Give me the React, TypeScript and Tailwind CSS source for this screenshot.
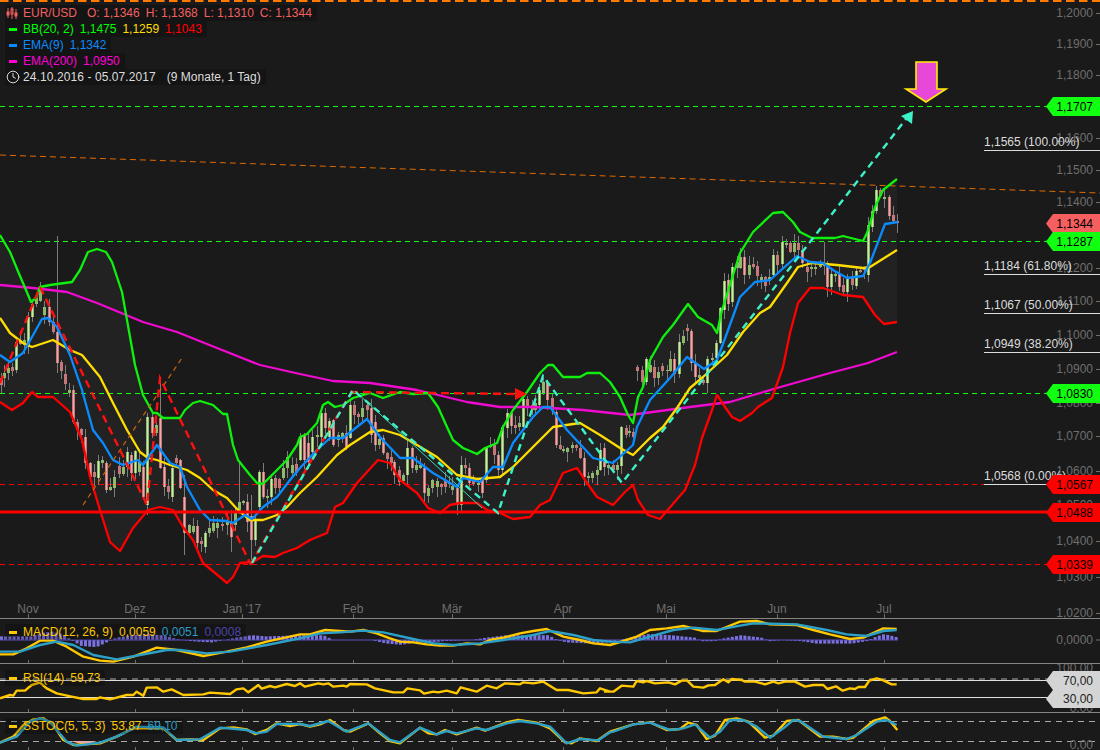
import * as React from 'react';
import { Clock } from 'lucide-react';

type Pt = [number, number];
// x, body top, body bottom, up?, optional wick high / low
type Candle = [number, number, number, number, number?, number?];

const pts = (p: Pt[]) => p.map(([x, y]) => `${x},${y}`).join(' ');
// series below were read from 3x crops, so convert back to page coordinates
const crop = (ox: number, oy: number, p: Pt[]): Pt[] => p.map(([x, y]) => [ox + x / 3, oy + y / 3]);

const BB_UPPER: Pt[] = [[0,235],[10,252],[20,276],[26,290],[31,302],[36,298],[40,287],[50,285],[72,282],[80,270],[88,252],[97,249],[106,252],[112,262],[118,280],[122,292],[127,320],[135,365],[143,395],[153,413],[157,413],[163,418],[180,418],[185,410],[193,403],[200,401],[213,405],[223,414],[227,414],[233,445],[238,460],[250,475],[257,483],[263,484],[272,475],[287,460],[297,445],[300,437],[307,434],[317,423],[323,405],[328,402],[335,407],[343,405],[353,398],[370,393],[383,398],[400,392],[413,394],[428,393],[438,407],[447,427],[453,440],[463,448],[477,454],[485,448],[497,443],[503,427],[513,410],[527,392],[540,373],[548,365],[553,365],[563,377],[580,377],[587,373],[600,373],[610,382],[620,397],[628,415],[633,423],[638,397],[643,387],[650,360],[663,337],[673,325],[688,304],[698,317],[712,325],[717,333],[722,310],[740,253],[753,232],[773,213],[783,212],[793,222],[800,232],[812,238],[835,238],[843,236],[863,241],[867,233],[875,207],[883,190],[897,179]];
const BB_LOWER: Pt[] = [[0,402],[12,410],[23,403],[32,392],[38,397],[53,397],[70,412],[82,440],[90,477],[100,510],[110,542],[120,551],[133,528],[148,510],[160,507],[173,510],[183,527],[193,540],[203,563],[227,583],[233,577],[240,563],[253,562],[263,556],[275,557],[283,553],[297,548],[310,540],[327,533],[335,507],[343,503],[357,483],[378,460],[390,463],[400,480],[417,493],[428,508],[440,513],[450,505],[460,503],[477,503],[487,510],[500,513],[513,519],[530,517],[540,505],[550,500],[563,473],[577,468],[587,483],[597,497],[613,505],[625,492],[633,485],[638,500],[648,515],[660,519],[672,505],[685,490],[695,465],[702,438],[712,410],[717,395],[725,407],[732,417],[740,421],[752,413],[758,407],[772,398],[783,367],[790,333],[798,303],[810,288],[823,288],[843,295],[863,297],[875,315],[884,324],[897,322]];
const BB_MID: Pt[] = [[0,318],[10,333],[23,343],[32,347],[53,340],[70,350],[82,355],[100,377],[113,403],[127,430],[140,452],[148,458],[157,460],[170,465],[187,470],[200,478],[213,490],[227,498],[238,510],[250,520],[263,520],[277,515],[287,507],[300,493],[317,477],[337,455],[350,445],[370,432],[383,430],[400,435],[417,445],[437,457],[457,475],[477,479],[500,477],[513,467],[533,447],[553,427],[580,423],[600,435],[620,448],[633,455],[650,438],[663,427],[677,408],[690,388],[703,377],[727,355],[743,332],[760,313],[770,307],[787,283],[798,267],[812,263],[837,265],[863,268],[870,267],[897,250]];
const EMA9: Pt[] = [[0,355],[10,362],[23,353],[32,337],[42,319],[48,318],[57,327],[70,355],[82,390],[93,430],[103,443],[113,460],[123,465],[138,460],[143,465],[157,445],[170,463],[180,467],[187,487],[200,510],[210,520],[227,521],[233,523],[245,515],[252,519],[263,507],[277,497],[290,480],[300,468],[317,450],[330,438],[343,438],[367,419],[380,437],[400,458],[413,458],[433,473],[457,487],[463,478],[480,482],[493,467],[503,467],[513,443],[533,417],[543,407],[550,407],[567,430],[593,458],[613,463],[633,445],[637,427],[650,400],[670,378],[687,357],[704,369],[717,360],[727,333],[740,297],[755,282],[770,280],[797,256],[810,262],[823,263],[833,270],[847,278],[863,276],[870,263],[885,224],[898,222]];
const EMA200: Pt[] = [[0,285],[33,288],[67,292],[97,303],[143,322],[177,332],[217,348],[260,365],[300,374],[333,381],[370,383],[417,390],[467,402],[500,407],[533,407],[583,410],[630,415],[690,407],[730,402],[777,388],[830,373],[868,363],[897,352]];

const CANDLES: Candle[] = [
  [1,378,385,0],[4,373,378,1],[8,368,373,1],[12,367,371,0],[16,342,370,1],[20,340,344,0],[24,340,345,1],[28,317,347,1],[32,304,317,1],[36,298,304,1],[40,290,301,1],[44,307,315,1],[49,307,322,0],[53,322,332,0],[57,332,363,0,236],[61,362,371,0],[65,374,384,0],[69,390,393,1],[73,390,422,0],[77,422,430,0],[81,429,435,0],[85,437,463,0],[90,463,477,0],[94,472,477,0],[98,461,478,1],[102,460,463,1],[106,463,490,0],[110,487,490,1],[114,477,488,1],[119,466,474,0],[123,467,474,1],[127,452,467,1],[131,455,473,0],[135,451,473,1],[139,461,472,1],[143,467,497,0],[147,417,505,1],[152,417,433,0],[156,425,433,1],[160,418,468,0,378],[164,467,487,0],[168,486,492,0],[172,468,497,1],[176,458,463,0],[180,460,488,0],[184,497,533,0,475,555],[189,525,533,1],[193,526,532,1],[197,526,543,0],[201,541,544,0],[205,533,547,1],[209,528,533,1],[213,523,531,1],[217,523,528,1],[222,524,526,0],[227,522,525,1],[231,522,537,0,510,552],[235,513,525,1],[239,502,510,1,462],[243,501,503,1],[247,502,522,0],[251,516,540,0,495,560],[255,520,540,1],[259,472,507,1],[263,472,497,0],[267,496,498,1],[271,479,497,1],[275,478,488,0],[279,479,488,0],[283,468,478,1],[287,457,468,1],[292,465,473,1],[296,464,473,0],[300,437,460,1],
  [304,435,460,0],[308,443,462,0],[312,437,452,1],[317,435,437,1],[321,413,437,1],[325,413,428,0],[329,421,437,1],[333,420,445,0],[338,435,440,1],[342,433,438,1],[346,433,447,0],[350,405,438,1],[354,405,415,0],[358,414,417,0],[362,408,417,1],[367,405,410,0],[371,408,435,0],[375,422,445,0],[379,439,445,1],[383,438,453,0],[387,453,459,0],[391,457,463,0],[394,462,475,0],[399,470,482,0],[403,475,481,1],[407,448,475,1],[412,448,468,0],[416,465,470,1],[420,465,468,1],[424,468,493,0],[428,488,496,1],[432,480,488,1],[437,481,487,1],[441,484,487,0],[445,480,487,0],[449,482,484,1],[452,486,490,1],[457,488,505,0],[461,465,505,1],[465,465,468,0],[469,468,483,0],[473,478,484,0],[478,483,485,1],[482,480,493,0],[486,448,480,1],[490,445,447,1],[494,445,455,0],[498,455,470,0],[502,427,470,1],[507,413,428,1],[511,413,426,0],[515,425,428,0],[519,423,427,1],[523,399,427,1],[527,399,406,0],[532,405,410,0],[535,403,410,1],[539,390,405,1],[543,382,393,1],[547,382,400,0],[552,398,410,0],[556,412,445,0],[560,445,449,0],[563,449,451,1],[567,448,452,1],[572,445,448,1],[576,445,448,0],[580,448,458,0],[584,458,477,0],[588,476,478,1],[592,473,478,1],[597,470,475,1],[600,450,470,1],[604,448,467,0],[608,465,468,1],[613,465,470,0],[617,465,470,1],[621,427,466,1],[626,428,435,0],[629,431,433,1],[633,432,437,0],
  [637,367,371,0],[642,370,382,0],[646,359,382,1],[650,365,372,1],[654,367,378,0],[658,372,378,1],[662,366,371,0],[667,370,371,1],[670,359,371,1],[674,359,374,0],[679,342,374,1],[683,336,343,1],[687,328,331,0],[691,331,363,0],[695,363,377,0],[699,375,378,1],[703,380,383,0],[707,359,383,1],[712,358,360,1],[716,343,358,1],[720,308,343,1],[724,281,310,1],[728,280,304,0],[732,267,302,1],[737,262,268,1],[740,257,268,1],[744,257,275,0],[749,265,275,1],[753,264,267,0],[757,266,276,0],[761,277,281,1],[765,277,286,0],[769,277,281,1],[773,255,275,1],[777,255,265,0],[782,242,264,1],[786,243,245,1],[790,243,252,0],[794,243,252,1],[798,243,250,0],[802,250,263,0],[807,267,272,0],[811,267,269,1],[815,267,269,1],[820,265,267,1],[824,264,266,1,242],[827,267,287,0],[831,274,287,1],[835,274,276,1],[839,274,287,0],[843,285,292,0],[847,279,292,1],[852,278,285,0],[856,271,286,1],[860,270,272,0],[864,268,270,1],[868,225,275,1],[872,211,227,1],[876,190,211,1],[880,190,196,0],[884,197,199,1],[889,197,216,0],[893,215,221,0],[897,221,223,0,214,233],
];

const MACD_Y: Pt[] = [...crop(0,600,[[0,163],[40,163],[80,145],[120,122],[160,122],[200,140],[250,170],[300,182],[340,185],[400,170],[470,143],[530,150],[610,168],[680,155],[740,142],[800,125],[900,103]]), ...crop(300,615,[[30,58],[75,45],[120,48],[150,50],[190,45],[230,55],[270,70],[300,80],[340,82],[380,88],[420,92],[460,92],[500,85],[540,88],[570,75],[610,68],[660,55],[700,48],[740,42],[790,65],[840,75],[880,85],[930,90]]), ...crop(600,615,[[70,78],[110,65],[150,45],[200,40],[250,33],[310,48],[350,48],[420,20],[470,18],[510,28],[590,30],[640,45],[690,58],[750,72],[790,68],[850,40],[890,42]])];
const MACD_T: Pt[] = [...crop(0,600,[[0,155],[60,155],[120,135],[170,125],[220,135],[280,165],[350,178],[420,165],[500,150],[540,150],[620,160],[690,155],[800,135],[900,115]]), ...crop(300,615,[[60,55],[120,52],[190,47],[250,52],[340,72],[400,85],[460,90],[540,85],[610,75],[700,60],[750,48],[820,60],[880,75]]), ...crop(600,615,[[30,80],[90,82],[150,65],[220,45],[280,38],[350,45],[420,32],[460,25],[590,28],[680,45],[740,58],[800,63],[850,48],[890,45]])];
// histogram height around the zero line, by position
const HIST_KEYS: Pt[] = [[0,3],[30,3],[40,6],[50,7],[60,5],[70,0],[80,-5],[95,-6],[105,-2],[115,2],[130,4],[145,5],[160,4],[175,1],[190,-1],[210,-2],[235,2],[250,4],[265,3],[300,4],[322,4],[332,0],[370,0],[385,-3],[400,-4],[415,-2],[430,-2],[440,-1],[470,0],[485,2],[505,4],[525,4],[547,4],[556,0],[565,-2],[590,-3],[605,-2],[618,0],[630,2],[647,5],[670,4],[693,2],[700,-1],[713,-1],[720,1],[740,4],[760,2],[768,-1],[780,0],[800,-1],[815,-3],[850,-3],[865,-1],[875,3],[883,5],[897,2]];

const RSI: Pt[] = [...crop(0,600,[[0,295],[30,285],[40,287],[50,272],[75,272],[95,255],[120,248],[140,265],[170,280],[215,290],[250,297],[290,297],[300,292],[330,298],[380,285],[400,285],[410,275],[430,287],[440,263],[470,262],[490,275],[515,268],[550,285],[610,283],[630,278],[690,282],[710,268],[730,265],[745,277],[775,255],[785,266],[810,258],[825,262],[860,252],[885,258],[900,250]]), ...crop(300,615,[[15,215],[55,205],[70,208],[85,205],[100,215],[130,212],[140,215],[150,207],[200,208],[225,220],[280,232],[310,232],[322,220],[360,226],[372,236],[400,230],[415,232],[440,227],[470,235],[482,217],[530,230],[560,212],[590,220],[615,205],[660,208],[670,202],[700,205],[730,200],[770,225],[805,225],[850,235],[890,232],[900,220],[930,230]]), ...crop(600,615,[[15,230],[40,230],[65,212],[100,215],[110,198],[130,202],[140,198],[165,205],[205,202],[225,208],[245,197],[262,197],[280,215],[310,218],[325,211],[345,210],[370,193],[385,202],[395,192],[425,195],[435,200],[465,200],[495,208],[520,200],[535,205],[555,200],[585,200],[615,215],[640,210],[670,210],[682,222],[708,214],[728,227],[750,220],[765,222],[775,216],[795,216],[808,197],[830,190],[850,196],[875,208],[890,208]])];

const STOCH_Y: Pt[] = [...crop(0,600,[[0,428],[40,410],[70,375],[100,358],[130,355],[160,375],[190,420],[220,435],[300,430],[350,410],[400,385],[440,385],[490,385],[530,420],[570,418],[610,420],[660,385],[700,382],[740,388],[765,402],[800,390],[830,370],[870,378],[900,372]]), ...crop(300,615,[[30,335],[60,328],[90,315],[130,345],[150,350],[205,325],[240,355],[270,378],[300,385],[360,338],[385,355],[410,358],[435,345],[470,358],[530,338],[555,347],[620,322],[655,315],[710,323],[750,340],[795,382],[815,385],[840,370],[890,378],[930,350]]), ...crop(600,615,[[30,350],[100,328],[150,322],[200,345],[240,342],[265,323],[290,330],[320,372],[345,362],[375,315],[410,310],[445,320],[495,368],[520,362],[560,318],[595,315],[660,365],[700,365],[740,372],[760,368],[820,318],[855,307],[870,318],[892,345]])];
const STOCH_T: Pt[] = [...crop(0,600,[[0,428],[50,410],[90,365],[120,355],[150,365],[200,425],[230,437],[300,428],[350,410],[410,380],[490,382],[530,420],[600,418],[660,383],[740,390],[770,400],[800,395],[830,372],[900,372]]), ...crop(300,615,[[30,333],[85,318],[140,350],[205,325],[270,375],[300,382],[360,338],[410,358],[440,348],[470,355],[530,340],[560,345],[620,325],[660,318],[710,325],[750,335],[800,385],[840,372],[895,376],[930,352]]), ...crop(600,615,[[40,350],[100,328],[150,323],[210,345],[250,340],[285,328],[330,368],[360,350],[390,315],[430,315],[470,335],[510,368],[550,340],[580,315],[600,318],[670,365],[740,372],[770,360],[830,320],[860,315],[890,330]])];

const MONTHS: [string, number][] = [['Nov',28],['Dez',135],["Jan '17",242],['Feb',353],['Mär',452],['Apr',563],['Mai',666],['Jun',777],['Jul',884]];
const PRICE_AXIS: [string, number][] = [['1,2000',13],['1,1900',44],['1,1800',75],['1,1600',138],['1,1500',170],['1,1400',202],['1,1200',268],['1,1100',301],['1,1000',335],['1,0900',369],['1,0800',403],['1,0700',436],['1,0600',471],['1,0500',505],['1,0400',541],['1,0300',577],['1,0200',613]];
const FIBS: [string, number][] = [['1,1565 (100.00%)',150],['1,1184 (61.80%)',274],['1,1067 (50.00%)',313],['1,0949 (38.20%)',352],['1,0568 (0.00%)',484]];
const TAGS: [string, number, string][] = [['1,1707',106,'bg-[#11ff11]'],['1,1344',223,'bg-[#f65f5f]'],['1,1287',241,'bg-[#11ff11]'],['1,0830',393,'bg-[#11ff11]'],['1,0567',484,'bg-[#ff0000]'],['1,0488',512,'bg-[#ff0000]'],['1,0339',564,'bg-[#ff0000]']];

function histAt(x: number) {
  for (let i = 1; i < HIST_KEYS.length; i++) {
    const [x0, v0] = HIST_KEYS[i - 1];
    const [x1, v1] = HIST_KEYS[i];
    if (x <= x1) return v0 + ((v1 - v0) * (x - x0)) / (x1 - x0);
  }
  return 0;
}

function Candles() {
  return (
    <>
      {CANDLES.map(([x, top, bot, up, hi, lo]) => {
        const h = bot - top;
        const high = hi ?? top - (((x * 13) % 9) + 1);
        const low = lo ?? bot + (((x * 7) % 10) + 1);
        return (
          <g key={x}>
            <line x1={x + 0.5} x2={x + 0.5} y1={high} y2={low} stroke="#7d7d7d" />
            <rect x={x - 1} y={top} width={3} height={h} fill={up ? '#8fb96c' : '#c57878'} />
            {h > 12 && <rect x={x} y={top} width={1} height={h} fill={up ? '#cbe9a8' : '#ebaaaa'} />}
          </g>
        );
      })}
    </>
  );
}

function MainChart() {
  return (
    <svg className="absolute inset-0" width={1100} height={618} viewBox="0 0 1100 618">
      <polygon points={pts([...BB_UPPER, ...[...BB_LOWER].reverse()])} fill="#222222" />
      <line x1={0} x2={1100} y1={1} y2={1} stroke="#ff7a00" strokeWidth={2} strokeDasharray="8.5 4.5" />
      <line x1={0} y1={155} x2={1100} y2={193} stroke="#e06a00" strokeDasharray="6 4" />
      <g stroke="#11ff11" strokeDasharray="5 4">
        <line x1={0} x2={1048} y1={106.5} y2={106.5} />
        <line x1={0} x2={1048} y1={241.5} y2={241.5} />
        <line x1={0} x2={1048} y1={393.5} y2={393.5} />
      </g>
      <g stroke="#ff0000" strokeDasharray="5 4">
        <line x1={0} x2={1048} y1={484.5} y2={484.5} />
        <line x1={0} x2={1048} y1={564.5} y2={564.5} />
      </g>
      <Candles />
      <g fill="none" strokeWidth={2.3} strokeLinejoin="round">
        <polyline points={pts(EMA200)} stroke="#f00ad0" />
        <polyline points={pts(BB_UPPER)} stroke="#0ff00f" />
        <polyline points={pts(BB_LOWER)} stroke="#ff0000" />
        <polyline points={pts(BB_MID)} stroke="#ffdd00" />
        <polyline points={pts(EMA9)} stroke="#0a8cff" />
      </g>
      <line x1={0} x2={1050} y1={512} y2={512} stroke="#ff0000" strokeWidth={3} />

      <line x1={83} y1={505} x2={182} y2={358} stroke="#c8660c" strokeWidth={1.2} strokeDasharray="5 4" />
      <polyline points="0,383 40,287 147,505 160,378 250,563" fill="none" stroke="#ff1010" strokeWidth={2.4} strokeDasharray="8 5" />
      <line x1={250} y1={565} x2={352} y2={391} stroke="#ff1010" strokeWidth={2.4} strokeDasharray="8 5" />
      <line x1={350} y1={392} x2={516} y2={394} stroke="#ff1010" strokeWidth={2.4} strokeDasharray="8 5" />
      <polygon points="515,388 527,394 515,400" fill="#ff1010" />

      <line x1={355} y1={391} x2={482} y2={508} stroke="#39d9b5" />
      <polyline points="252,563 353,390 498,513 543,376 622,483 906,119" fill="none" stroke="#3df2c8" strokeWidth={2.4} strokeDasharray="7 5" />
      <polygon points="901,116 913,111 912,124" fill="#3df2c8" />

      <polygon points="916,62 937,62 937,89 946,89 926,102 906,89 916,89" fill="#e848d8" stroke="#ffee00" strokeWidth={1.6} />

      <g stroke="#6f6f6f">
        {PRICE_AXIS.map(([t, y]) => <line key={t} x1={1096} x2={1100} y1={y + 0.5} y2={y + 0.5} />)}
        {MONTHS.map(([t, x]) => <line key={t} x1={x + 0.5} x2={x + 0.5} y1={614} y2={618} />)}
      </g>
    </svg>
  );
}

// svg for a lower pane, drawn in page coordinates
function PaneSvg({ top, height, children, ticksAt }: { top: number; height: number; children: React.ReactNode; ticksAt: number }) {
  return (
    <svg className="absolute inset-0" width={1100} height={height} viewBox={`0 ${top} 1100 ${height}`}>
      {children}
      <g stroke="#6f6f6f">
        {MONTHS.map(([t, x]) => <line key={t} x1={x + 0.5} x2={x + 0.5} y1={ticksAt - 3} y2={ticksAt} />)}
      </g>
    </svg>
  );
}

function Legend({ children }: { children: React.ReactNode }) {
  return <div className="flex h-4 w-fit items-center gap-[6px] bg-black/20 pl-1 pr-[5px] text-xs leading-4">{children}</div>;
}

function Swatch({ className }: { className: string }) {
  return <span className={`h-[3px] w-2 ${className}`} />;
}

function AxisLabel({ text, y }: { text: string; y: number }) {
  return (
    <span className="absolute right-[7px] -translate-y-1/2 text-xs leading-none text-[#6f6f6f]" style={{ top: y }}>
      {text}
    </span>
  );
}

function CandleIcon() {
  return (
    <svg width={12} height={12} viewBox="0 0 12 12" className="-ml-[3px] -mr-[1px]" stroke="#f26060" fill="none">
      <path d="M2 1v10M6 0v12M10 2v10" />
      <rect x={1} y={5} width={2} height={3} fill="#f26060" />
      <rect x={5} y={2} width={2} height={5} />
      <rect x={9} y={6} width={2} height={3} fill="#f26060" />
    </svg>
  );
}

export default function App() {
  return (
    <div className="flex h-[750px] w-[1100px] flex-col overflow-hidden bg-[#1a1a1a] font-['Liberation_Sans',Arial,sans-serif]">
      {/* price pane */}
      <section className="relative h-[619px] shrink-0 overflow-hidden border-b border-[#85857f]">
        <MainChart />
        {PRICE_AXIS.map(([t, y]) => <AxisLabel key={t} text={t} y={y} />)}
        {MONTHS.map(([t, x]) => (
          <span key={t} className="absolute top-[603px] -translate-x-1/2 text-xs leading-none text-[#6f6f6f]" style={{ left: x }}>
            {t}
          </span>
        ))}
        {FIBS.map(([t, y]) => (
          <div key={t} className="absolute left-[984px] right-0 h-4 border-b border-[#dddddd] text-xs leading-[14px] text-[#dddddd]" style={{ top: y - 15 }}>
            {t}
          </div>
        ))}
        {TAGS.map(([t, y, bg]) => (
          <div key={t} className={`absolute left-[1046px] flex h-[19px] w-[54px] items-center justify-end pr-[7px] text-xs text-black [clip-path:polygon(7px_0,100%_0,100%_100%,7px_100%,0_50%)] ${bg}`} style={{ top: y - 9 }}>
            {t}
          </div>
        ))}
        <div className="absolute left-[5px] top-[5px] flex flex-col">
          <Legend>
            <CandleIcon />
            <span className="mr-1 text-[#f26060]">EUR/USD</span>
            <span className="text-[#f26060]">O: 1,1346</span>
            <span className="text-[#f26060]">H: 1,1368</span>
            <span className="text-[#f26060]">L: 1,1310</span>
            <span className="text-[#f26060]">C: 1,1344</span>
          </Legend>
          <Legend>
            <Swatch className="bg-[#00ff00]" />
            <span className="text-[#00ff00]">BB(20, 2)</span>
            <span className="text-[#00ff00]">1,1475</span>
            <span className="text-[#ffdd00]">1,1259</span>
            <span className="text-[#ff0000]">1,1043</span>
          </Legend>
          <Legend>
            <Swatch className="bg-[#0a8cff]" />
            <span className="text-[#0a8cff]">EMA(9)</span>
            <span className="text-[#0a8cff]">1,1342</span>
          </Legend>
          <Legend>
            <Swatch className="bg-[#ff00d8]" />
            <span className="text-[#ff00d8]">EMA(200)</span>
            <span className="text-[#ff00d8]">1,0950</span>
          </Legend>
          <Legend>
            <Clock size={14} strokeWidth={1.6} className="-ml-[3px] -mr-[3px] text-[#e8e8e8]" />
            <span className="tracking-[0.09px] text-[#dddddd]">24.10.2016 - 05.07.2017</span>
            <span className="ml-[5px] text-[#dddddd]">(9 Monate, 1 Tag)</span>
          </Legend>
        </div>
      </section>

      {/* MACD */}
      <section className="relative h-[45px] shrink-0 overflow-hidden border-b border-[#85857f]">
        <PaneSvg top={619} height={44} ticksAt={663}>
          {Array.from({ length: 214 }, (_, i) => {
            const x = i * 4.2;
            const v = histAt(x) * 1.2;
            return (
              <rect key={i} x={x} y={v > 0 ? 640 - v : 640} width={3} height={Math.abs(v)} fill="#7a72e0" />
            );
          })}
          <line x1={0} x2={898} y1={640} y2={640} stroke="#5a50c0" />
          <g fill="none" strokeWidth={2.4} strokeLinejoin="round">
            <polyline points={pts(MACD_Y)} stroke="#ffc800" />
            <polyline points={pts(MACD_T)} stroke="#2da0c8" />
          </g>
          <line x1={1096} x2={1100} y1={640} y2={640} stroke="#6f6f6f" />
        </PaneSvg>
        <AxisLabel text="0,0000" y={21} />
        <div className="absolute left-[5px] top-[5px]">
          <Legend>
            <Swatch className="bg-[#ffc800]" />
            <span className="text-[#ffc800]">MACD(12, 26, 9)</span>
            <span className="text-[#ffc800]">0,0059</span>
            <span className="text-[#2a9bc4]">0,0051</span>
            <span className="text-[#4a44a8]">0,0008</span>
          </Legend>
        </div>
      </section>

      {/* RSI */}
      <section className="relative h-[49px] shrink-0 overflow-hidden border-b border-[#85857f]">
        <PaneSvg top={664} height={48} ticksAt={712}>
          <line x1={0} x2={1050} y1={679} y2={679} stroke="#aaaaaa" strokeDasharray="6 5" />
          <line x1={0} x2={1050} y1={680.5} y2={680.5} stroke="#e0e0e0" />
          <line x1={0} x2={1050} y1={697.5} y2={697.5} stroke="#e0e0e0" />
          <polygon points="78,698 98,698 88,700" fill="#e8a8b0" />
          <polyline points={pts(RSI)} fill="none" stroke="#ffc800" strokeWidth={2.4} strokeLinejoin="round" />
        </PaneSvg>
        <AxisLabel text="100,00" y={4} />
        <AxisLabel text="0,00" y={44} />
        <div className="absolute left-[1046px] top-[7px] flex h-[19px] w-[54px] items-center justify-end bg-[#d4d4d4] pr-[7px] text-xs text-[#222222] [clip-path:polygon(7px_0,100%_0,100%_100%,7px_100%,0_50%)]">70,00</div>
        <div className="absolute left-[1046px] top-[26px] flex h-[18px] w-[54px] items-center justify-end bg-[#d4d4d4] pr-[7px] text-xs text-[#222222] [clip-path:polygon(7px_0,100%_0,100%_100%,7px_100%,0_50%)]">30,00</div>
        <div className="absolute left-[5px] top-[6px]">
          <Legend>
            <Swatch className="bg-[#ffc800]" />
            <span className="text-[#ffc800]">RSI(14)</span>
            <span className="text-[#ffc800]">59,73</span>
          </Legend>
        </div>
      </section>

      {/* slow stochastic */}
      <section className="relative min-h-0 flex-1 overflow-hidden">
        <PaneSvg top={713} height={37} ticksAt={750}>
          <line x1={0} x2={1100} y1={721.5} y2={721.5} stroke="#aaaaaa" strokeDasharray="6 5" />
          <line x1={0} x2={1100} y1={741.5} y2={741.5} stroke="#aaaaaa" strokeDasharray="6 5" />
          <polygon points="70,741 97,741 85,745" fill="#e8a8b0" />
          <g fill="none" strokeWidth={2.4} strokeLinejoin="round">
            <polyline points={pts(STOCH_Y)} stroke="#ffc800" />
            <polyline points={pts(STOCH_T)} stroke="#2da0c8" />
          </g>
        </PaneSvg>
        <AxisLabel text="0,00" y={32} />
        <div className="absolute left-[5px] top-[5px]">
          <Legend>
            <Swatch className="bg-[#ffc800]" />
            <span className="text-[#ffc800]">SSTOC(5, 5, 3)</span>
            <span className="text-[#ffc800]">53,87</span>
            <span className="text-[#2a9bc4]">69,10</span>
          </Legend>
        </div>
      </section>
    </div>
  );
}
